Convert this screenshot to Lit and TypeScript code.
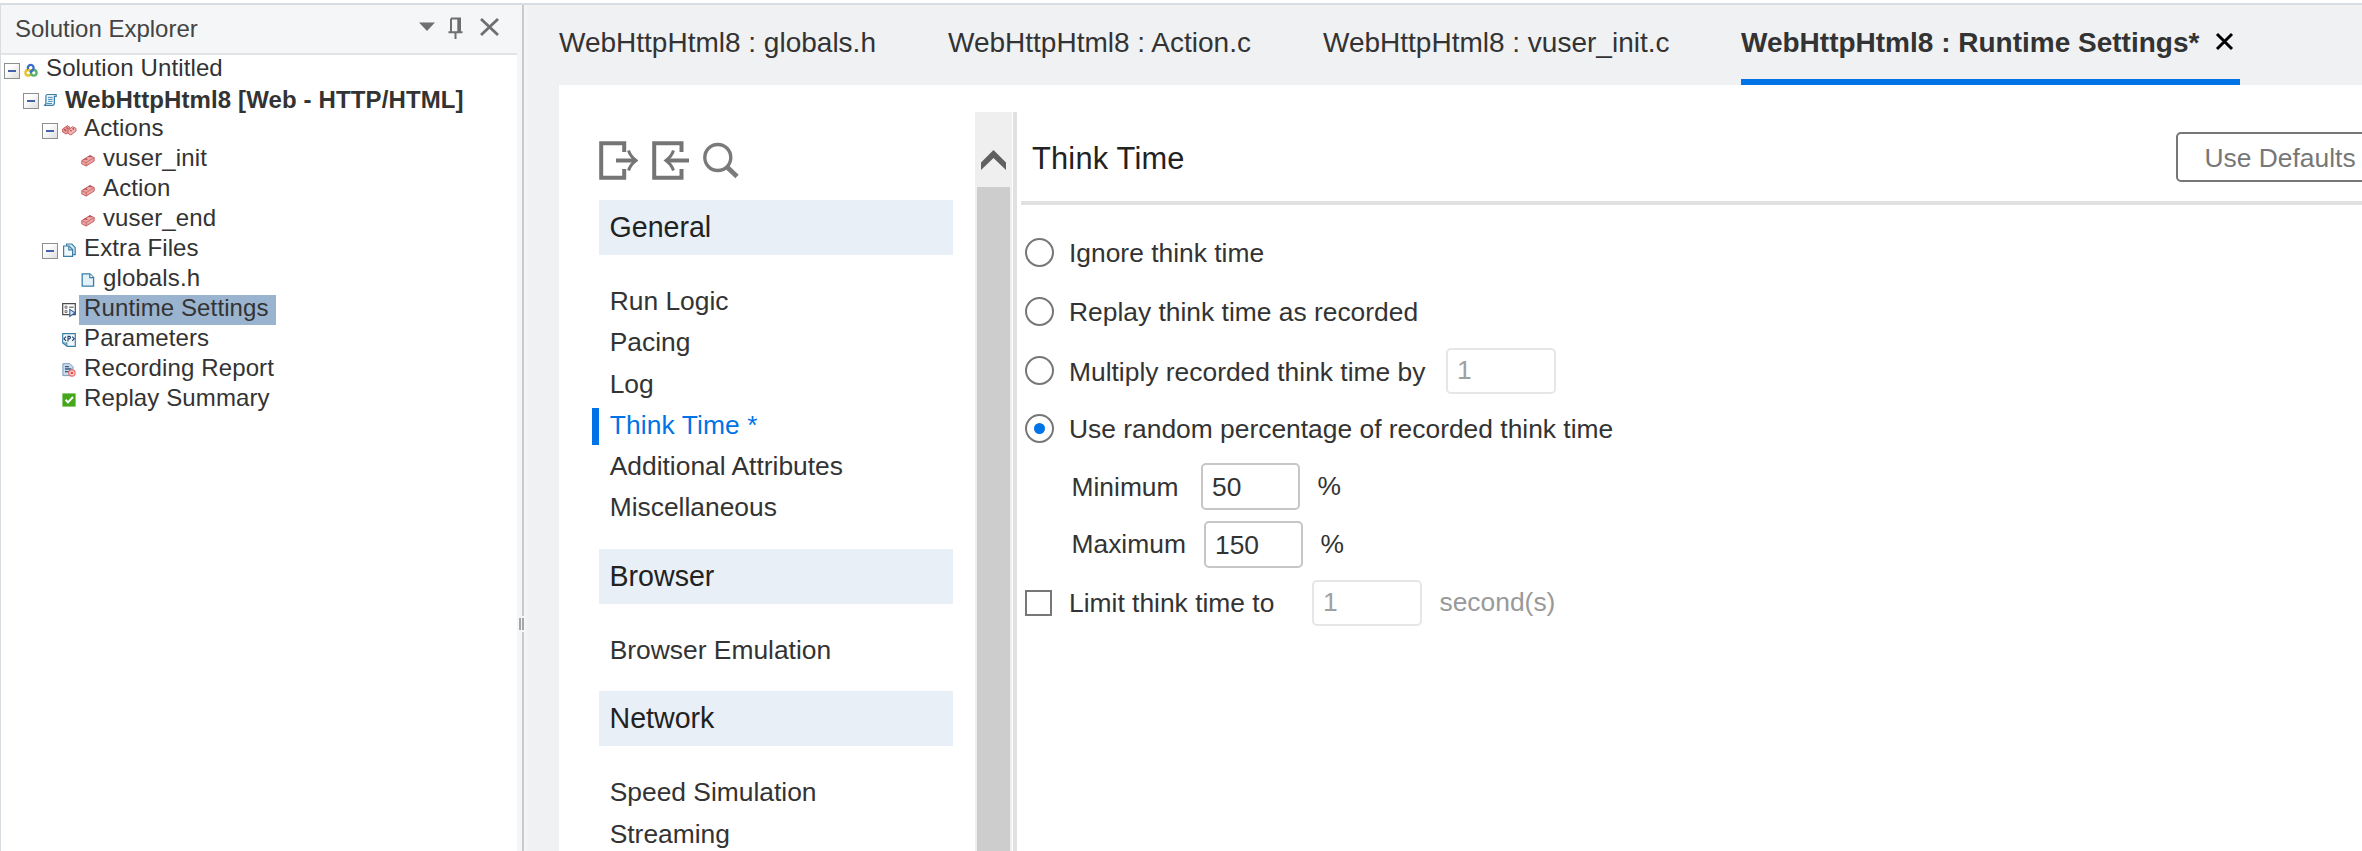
import { LitElement, html, svg, css, TemplateResult } from "lit";
import { customElement } from "lit/decorators.js";
import { classMap } from "lit/directives/class-map.js";

type Node = { label: string; depth: number; icon: string; open?: boolean; bold?: boolean; selected?: boolean };

const TREE: Node[] = [
  { label: "Solution Untitled", depth: 0, icon: "solution", open: true },
  { label: "WebHttpHtml8 [Web - HTTP/HTML]", depth: 1, icon: "script", open: true, bold: true },
  { label: "Actions", depth: 2, icon: "bricks", open: true },
  { label: "vuser_init", depth: 3, icon: "brick" },
  { label: "Action", depth: 3, icon: "brick" },
  { label: "vuser_end", depth: 3, icon: "brick" },
  { label: "Extra Files", depth: 2, icon: "files", open: true },
  { label: "globals.h", depth: 3, icon: "page" },
  { label: "Runtime Settings", depth: 2, icon: "runtime", selected: true },
  { label: "Parameters", depth: 2, icon: "params" },
  { label: "Recording Report", depth: 2, icon: "report" },
  { label: "Replay Summary", depth: 2, icon: "check" },
];

const GROUPS = [
  { title: "General", items: ["Run Logic", "Pacing", "Log", "Think Time *", "Additional Attributes", "Miscellaneous"] },
  { title: "Browser", items: ["Browser Emulation"] },
  { title: "Network", items: ["Speed Simulation", "Streaming"] },
];

const ICONS: Record<string, TemplateResult> = {
  solution: svg`<g fill="none" stroke-width="2.3">
    <circle cx="4.2" cy="9.8" r="2.8" stroke="#e6c02a"/>
    <circle cx="9.8" cy="9.8" r="2.8" stroke="#58b368"/>
    <path d="M4.2 6.2A2.9 2.9 0 1 1 9.3 6.2L6.2 9.4" stroke="#3a6cc8"/></g>`,
  script: svg`<path d="M4.5 1.5H13.2V3.4H11.4V10.2Q11.2 12.4 9.4 12.4H1Q2.8 12 2.9 10V3Q3 1.5 4.5 1.5Z" fill="#e6f2fa" stroke="#3c7fa6" stroke-width="1.2"/>
    <path d="M5 4.4H9.6M5 6.4H9.6M5 8.4H9.6M3.5 10.5H9" stroke="#4d8fb5" stroke-width="1"/>`,
  bricks: svg`<path d="M.6 6L5.5 2.6L8 4.5V8.4L4 11L.6 9Z" fill="#e79b9b" stroke="#c25757" stroke-width=".9"/>
    <path d="M6 7.4L10.5 3.6L14 5.4V8L9 12L6 10.4Z" fill="#f1b5b5" stroke="#c25757" stroke-width=".9"/>
    <path d="M2 6.4L4.4 7.6M4.5 4.6L6.4 5.8M8.2 7.2L9.6 8.2M10.5 5.4L12 6.4" stroke="#b64c4c" stroke-width="1.3"/>`,
  brick: svg`<path d="M.8 7.6L8.8 2.6L13.2 4.6V8L5.2 13L.8 10.9Z" fill="#eba8a8" stroke="#c25757" stroke-width=".9"/>
    <path d="M.8 7.6L5.2 9.6L13.2 4.6M5.2 9.6V13" fill="none" stroke="#c86464" stroke-width=".9"/>
    <path d="M3.4 6.6Q4.8 5.2 6.2 6.8M7.8 3.8Q9.2 2.4 10.6 4" fill="#f5caca" stroke="#b64c4c" stroke-width="1.2"/>`,
  files: svg`<path d="M4.6 1H9.8L13.2 4.4V11.6H4.6Z" fill="#d5e9f4" stroke="#3c7fa6" stroke-width="1.2"/>
    <path d="M1.6 3H7L10.6 6.6V13.4H1.6Z" fill="#eef7fc" stroke="#3c7fa6" stroke-width="1.2"/>
    <path d="M6.8 3.2V6.8H10.4" fill="none" stroke="#3c7fa6" stroke-width="1.2"/>`,
  page: svg`<path d="M1.2 .8H9L12.6 4.4V13.2H1.2Z" fill="#e3f1f9" stroke="#3c7fa6" stroke-width="1.3"/>
    <path d="M8.8 1V4.6H12.4" fill="#fff" stroke="#3c7fa6" stroke-width="1.2"/>`,
  runtime: svg`<path d="M.7 .7H13.3V11.6H.7Z" fill="#fff" stroke="#4a4a4a" stroke-width="1.2"/>
    <path d="M3 3.2H5V5.2H3ZM3 7.6H5V9.6H3Z" fill="none" stroke="#666" stroke-width=".9"/>
    <path d="M7.2 4.2H11.6" stroke="#555" stroke-width="1.1"/>
    <path d="M7.8 6.4L13 9.8L7.8 13.4Z" fill="#d3e7f8" stroke="#2f62a0" stroke-width="1.1"/>`,
  params: svg`<path d="M.7 .7H13.3V13.3H5.2L.7 10Z" fill="#f0f8fc" stroke="#3c7fa6" stroke-width="1.2"/>
    <path d="M1 10H4.8V13" fill="none" stroke="#3c7fa6" stroke-width="1.1"/>
    <path d="M4 3.6L2 5.7L4 7.8M10.2 3.6L12.2 5.7L10.2 7.8M6 8.6V3.4H7.4Q8.6 3.6 8.4 4.8Q8.2 6 6.2 6" fill="none" stroke="#1d3f66" stroke-width="1.1"/>`,
  report: svg`<path d="M.9 .7H8L11 3.7V12.6H.9Z" fill="#c9dbea" stroke="#7e9cb8" stroke-width="1"/>
    <path d="M3 3.6H7M3 6H9.4M3 8.6H7.4" stroke="#33597f" stroke-width="1.4"/>
    <circle cx="9.9" cy="10" r="3.2" fill="#fbd3d3" stroke="#ee6a6a" stroke-width="1.2"/>
    <circle cx="9.9" cy="10" r="1.3" fill="#e84848"/>`,
  check: svg`<rect x=".4" y=".4" width="13.2" height="13.2" fill="#43a81c"/>
    <path d="M3.6 6.8L6 9.4L11 4" fill="none" stroke="#fff" stroke-width="2"/>`,
};

@customElement("app-root")
export class AppRoot extends LitElement {
  static styles = css`
    :host {
      display: block;
      width: 100%;
      height: 851px;
      overflow: hidden;
      background: #fff;
      color: #333;
      font-family: "Liberation Sans", Arial, sans-serif;
    }
    * { box-sizing: border-box; }
    svg { display: block; flex: none; }
    .window {
      display: flex;
      height: 848px;
      margin-top: 3px;
      border-top: 2px solid #d8dde2;
      border-left: 1px solid #d8dde2;
    }

    .explorer { flex: none; width: 516px; display: flex; flex-direction: column; }
    .caption {
      display: flex;
      align-items: center;
      height: 50px;
      padding-left: 14px;
      border-bottom: 2px solid #e2e3e4;
      background: #f5f6f8;
      color: #444;
      font-size: 24px;
      line-height: 46px;
    }
    .caption .name { flex: 1; }
    .caption svg { margin-bottom: 1px; }
    .tree { flex: 1; }
    .row { display: flex; height: 30px; }
    .d0 { padding-left: 3px; }
    .d1 { padding-left: 22px; }
    .d2 { padding-left: 41px; }
    .d3 { padding-left: 60px; }
    .slot { width: 16px; height: 16px; margin: 8px 4px 0 0; }
    .toggle {
      display: flex;
      align-items: center;
      justify-content: center;
      border: 1px solid #8e8f8f;
      background: linear-gradient(135deg, #fff 30%, #dedede);
    }
    .toggle::after { content: ""; width: 8px; height: 2px; background: #4661ab; }
    .row svg { margin-top: 8px; }
    .label {
      height: 30px;
      margin-left: 2px;
      padding: 0 7px 0 5px;
      font-size: 24px;
      line-height: 26px;
      letter-spacing: 0.12px;
      white-space: nowrap;
    }
    .label.bold { font-weight: bold; line-height: 29px; }
    .label.selected { background: #9ab3cf; }

    .splitter {
      flex: none;
      display: flex;
      flex-direction: column;
      width: 10px;
      padding-left: 5px;
      background: linear-gradient(90deg, #f5f6f8 80%, #f3f4f6);
    }
    .track { width: 2px; background: #c9cacc; }
    .track.top { height: 611px; }
    .track.bottom { flex: 1; }
    .grip {
      width: 5px;
      height: 12px;
      margin: 2px 0 2px -3px;
      border: solid #a6a6a6;
      border-width: 0 2px;
    }

    .workspace { flex: 1; min-width: 0; display: flex; flex-direction: column; padding-left: 32px; background: #f0f1f3; }
    .tabs { display: flex; flex: none; height: 80px; font-size: 28px; line-height: 76px; white-space: nowrap; }
    .tab { flex: none; height: 80px; border-bottom: 6px solid transparent; }
    .tab.t0 { width: 389px; }
    .tab.t1 { width: 375px; }
    .tab.t2 { width: 418px; }
    .tab.current { display: flex; width: 499px; font-weight: bold; border-color: #0073e7; }
    .tab.current .text { width: 474px; }
    .tab.current svg { margin-top: 27px; }

    .page { flex: 1; min-height: 0; display: flex; background: #fff; overflow: hidden; }
    .nav { flex: none; width: 416px; padding: 56px 22px 0 40px; }
    .tools { display: flex; height: 59px; }
    .tools .in { margin-left: 14px; }
    .tools .find { margin-left: 13px; }
    .group { height: 55px; padding-left: 10.5px; background: #e8eff7; color: #222; font-size: 28.6px; line-height: 55px; }
    .items { padding: 26px 0 20.2px; }
    .item { height: 41.3px; padding-left: 10.7px; font-size: 26.4px; line-height: 41.3px; white-space: nowrap; }
    .item.on { display: flex; align-items: center; margin-left: -7px; padding-left: 0; color: #0073e7; letter-spacing: 0.1px; }
    .item.on::before { content: ""; width: 7px; height: 37px; margin: 2px 10.7px 0 0; background: #0073e7; }

    .scroll { flex: none; width: 37px; margin-top: 27px; padding: 0 2px; background: #efefef; display: flex; flex-direction: column; }
    .scroll .up { height: 75px; padding: 38px 0 0 4px; }
    .scroll .thumb { flex: 1; background: #cdcdcd; }
    .rule { flex: none; width: 4px; margin: 27px 4px 0 1px; background: #e1e1e1; }

    .settings { flex: 1; min-width: 0; padding-top: 27px; overflow: hidden; }
    .head { display: flex; height: 93px; padding: 20px 0 0 11px; border-bottom: 4px solid #e1e1e1; }
    .head .title { flex: none; width: 1144px; color: #222; font-size: 30.8px; line-height: 54px; letter-spacing: 0.2px; }
    .defaults {
      flex: none;
      width: 200px;
      height: 50px;
      padding-left: 26.5px;
      border: 2px solid #777;
      border-radius: 5px;
      color: #777;
      font-size: 26.4px;
      line-height: 48px;
    }
    .form { padding: 18px 0 0 4px; font-size: 26.4px; white-space: nowrap; }
    .opt { display: flex; align-items: center; height: 59px; }
    .opt .text { padding-top: 2px; }
    .opt.short { height: 57px; }
    .opt.sub { height: 58px; padding-left: 46.5px; }
    .opt.limit { height: 60px; }
    .mark { flex: none; width: 29px; height: 29px; margin-right: 15px; border: 2px solid #777; border-radius: 50%; background: #fff; }
    .mark.on { display: flex; align-items: center; justify-content: center; }
    .mark.on::after { content: ""; width: 11px; height: 11px; border-radius: 50%; background: #0073e7; }
    .box { flex: none; width: 27px; height: 26px; margin-right: 17px; border: 2px solid #777; background: #fff; }
    .text.by { width: 377px; padding-top: 3px; }
    .text.min { width: 129.5px; }
    .text.max { width: 132.5px; padding-top: 1px; }
    .text.lim { width: 243px; padding-top: 1px; }
    .field { flex: none; width: 99px; height: 47px; padding-left: 9px; border: 2px solid #c6c6c6; border-radius: 5px; line-height: 44px; }
    .field.off { width: 110px; height: 46px; padding-left: 9px; border-color: #e6e6e6; color: #a0a0a0; line-height: 41px; }
    .unit { margin-left: 17.5px; padding-top: 1px; }
    .unit.off { color: #999; margin-bottom: 2px; padding-top: 0; }
  `;

  private row(n: Node) {
    return html`<div class="row d${n.depth}">
      <span class=${classMap({ slot: true, toggle: !!n.open })}></span>
      <svg width="15" height="15" viewBox="0 0 15 15">${ICONS[n.icon]}</svg>
      <span class=${classMap({ label: true, bold: !!n.bold, selected: !!n.selected })}>${n.label}</span>
    </div>`;
  }

  render() {
    return html`<div class="window">
      <aside class="explorer">
        <div class="caption">
          <span class="name">Solution Explorer</span>
          <svg width="99" height="24" viewBox="0 0 99 24">
            <path d="M1 5.5H17L9 14Z" fill="#6f6f6f"/>
            <path d="M33 1.5H42V15M33 1.5V15M30.5 15.2H44.5M37.5 15V22" fill="none" stroke="#6f6f6f" stroke-width="2"/>
            <path d="M40.8 1.5V15" stroke="#6f6f6f" stroke-width="3"/>
            <path d="M63 2L80 18M80 2L63 18" stroke="#6f6f6f" stroke-width="2.8"/>
          </svg>
        </div>
        <div class="tree">${TREE.map((n) => this.row(n))}</div>
      </aside>
      <div class="splitter"><span class="track top"></span><span class="grip"></span><span class="track bottom"></span></div>
      <main class="workspace">
        <nav class="tabs">
          <div class="tab t0">WebHttpHtml8 : globals.h</div>
          <div class="tab t1">WebHttpHtml8 : Action.c</div>
          <div class="tab t2">WebHttpHtml8 : vuser_init.c</div>
          <div class="tab current">
            <span class="text">WebHttpHtml8 : Runtime Settings*</span>
            <svg width="19" height="19" viewBox="0 0 19 19"><path d="M2 2L17 17M17 2L2 17" stroke="#000" stroke-width="3"/></svg>
          </div>
        </nav>
        <div class="page">
          <div class="nav">
            <div class="tools">
              <svg width="39" height="39" viewBox="0 0 39 39" fill="none" stroke="#757575">
                <path d="M25.2 11V2.2H2.2V36.8H25.2V28" stroke-width="4"/>
                <path d="M17 19.5H37" stroke-width="4"/><path d="M29.5 9.5Q31.5 15.5 37 19.5Q31.5 23.5 29.5 29.5" stroke-width="3"/>
              </svg>
              <svg class="in" width="38" height="39" viewBox="0 0 38 39" fill="none" stroke="#757575">
                <path d="M29.5 11V2.2H2.2V36.8H29.5V28" stroke-width="4"/>
                <path d="M14 19.5H37" stroke-width="4"/><path d="M21.5 9.5Q19.5 15.5 14 19.5Q19.5 23.5 21.5 29.5" stroke-width="3"/>
              </svg>
              <svg class="find" width="37" height="39" viewBox="0 0 37 39" fill="none" stroke="#7a7a7a">
                <circle cx="14.8" cy="16.5" r="13" stroke-width="3.4"/><path d="M24 26L34 35.5" stroke-width="4.8"/>
              </svg>
            </div>
            ${GROUPS.map((g) => html`<div class="group">${g.title}</div>
              <div class="items">${g.items.map((t) => html`<div class="item ${t.endsWith("*") ? "on" : ""}">${t}</div>`)}</div>`)}
          </div>
          <div class="scroll">
            <div class="up"><svg width="25" height="20" viewBox="0 0 25 20"><path d="M0 12.5L12.5 0L25 12.5V20L12.5 8L0 20Z" fill="#606060"/></svg></div>
            <div class="thumb"></div>
          </div>
          <div class="rule"></div>
          <section class="settings">
            <div class="head"><span class="title">Think Time</span><span class="defaults">Use Defaults</span></div>
            <div class="form">
              <div class="opt"><i class="mark"></i><span class="text">Ignore think time</span></div>
              <div class="opt"><i class="mark"></i><span class="text">Replay think time as recorded</span></div>
              <div class="opt"><i class="mark"></i><span class="text by">Multiply recorded think time by</span><span class="field off">1</span></div>
              <div class="opt short"><i class="mark on"></i><span class="text">Use random percentage of recorded think time</span></div>
              <div class="opt sub"><span class="text min">Minimum</span><span class="field">50</span><span class="unit">%</span></div>
              <div class="opt sub"><span class="text max">Maximum</span><span class="field">150</span><span class="unit">%</span></div>
              <div class="opt limit"><i class="box"></i><span class="text lim">Limit think time to</span><span class="field off">1</span><span class="unit off">second(s)</span></div>
            </div>
          </section>
        </div>
      </main>
    </div>`;
  }
}
